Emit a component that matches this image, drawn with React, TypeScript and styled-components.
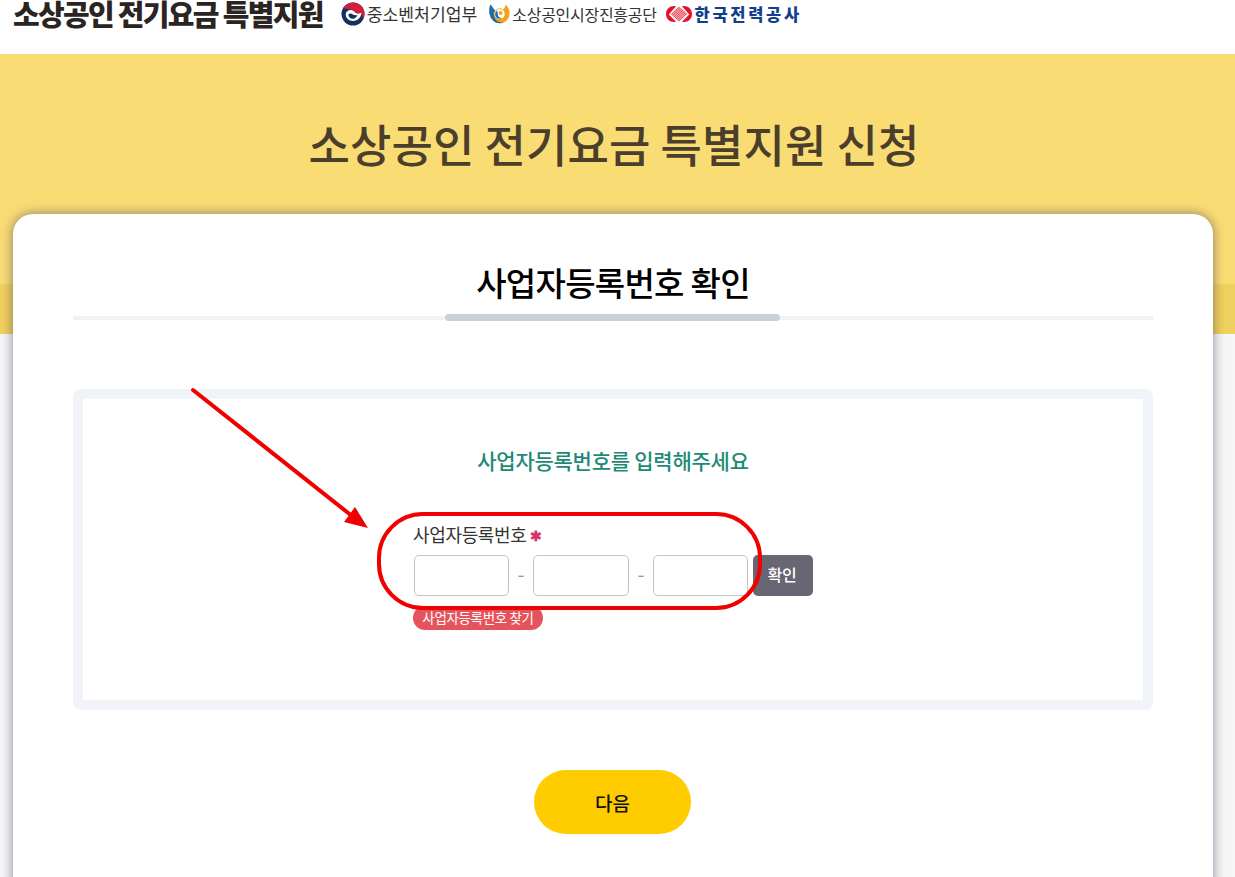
import React from 'react';
import styled, { createGlobalStyle } from 'styled-components';

const GlobalStyle = createGlobalStyle`
  html, body {
    margin: 0;
    padding: 0;
    height: 877px;
    overflow: hidden;
    background: #f6f6f6;
    font-family: "Noto Sans CJK KR", "Noto Sans", sans-serif;
  }
  * { box-sizing: border-box; }
`;

const Page = styled.div`
  position: relative;
  width: 1235px;
  height: 877px;
  overflow: hidden;
`;

const Header = styled.header`
  height: 54px;
  background: #fff;
  display: flex;
  align-items: flex-start;
  padding-left: 13px;
`;

const BrandTitle = styled.h1`
  margin: 0 18px 0 0;
  font-size: 29px;
  line-height: 27px;
  font-weight: 900;
  letter-spacing: -1.7px;
  color: #2a2522;
  white-space: nowrap;
`;

const Partner = styled.div<{ $gap: number; $size: number; $spacing: number }>`
  display: flex;
  align-items: center;
  height: 27px;
  margin-right: ${p => p.$gap}px;
  color: #333;
  font-size: ${p => p.$size}px;
  letter-spacing: ${p => p.$spacing}px;
  white-space: nowrap;
`;

const KepcoName = styled.span`
  color: #123f8c;
  font-weight: 900;
  font-size: 16.5px;
  letter-spacing: 2.7px;
`;

const Hero = styled.section`
  height: 280px;
  background: linear-gradient(#fadc75 0 230px, #f0d05e 230px);
  padding: 59px 7px 0 0;
  text-align: center;
`;

const HeroTitle = styled.h2`
  margin: 0;
  font-size: 45px;
  line-height: 62px;
  font-weight: 500;
  letter-spacing: 0.05px;
  color: #4b3f2c;
`;

const Card = styled.main`
  position: relative;
  width: 1200px;
  height: 700px;
  margin: -120px 0 0 13px;
  padding: 0 60px;
  background: #fff;
  border-radius: 20px;
  box-shadow: 0 0 12px rgba(50, 40, 80, 0.55);
`;

const SectionHead = styled.div`
  height: 106px;
  border-bottom: 4px solid #f0f2f6;
  display: flex;
  flex-direction: column;
  align-items: center;
  justify-content: flex-end;
  position: relative;
`;

const SectionTitle = styled.h3`
  margin: 0 0 10px;
  font-size: 33px;
  line-height: 48px;
  font-weight: 500;
  letter-spacing: -0.7px;
  color: #000;
`;

const TitleBar = styled.span`
  position: absolute;
  bottom: -5px;
  left: 372px;
  width: 335px;
  height: 7px;
  border-radius: 4px;
  background: #c8d0da;
`;

const FormBox = styled.div`
  margin-top: 69px;
  height: 321px;
  border: 10px solid #f0f3f8;
  border-radius: 8px;
  padding-top: 42px;
`;

const Prompt = styled.p`
  margin: 0 0 42px;
  text-align: center;
  font-size: 21px;
  line-height: 38px;
  font-weight: 500;
  letter-spacing: -0.25px;
  color: #1e8a76;
`;

const Field = styled.div`
  margin-left: 331px;
`;

const FieldLabel = styled.label`
  display: flex;
  align-items: flex-start;
  height: 34px;
  margin-left: -1px;
  font-size: 18px;
  line-height: 26px;
  letter-spacing: -0.35px;
  color: #333;
`;

const Required = styled.span`
  color: #d6336c;
  font-size: 14px;
  font-weight: 700;
  margin-left: 4px;
  padding-top: 1px;
`;

const InputRow = styled.div`
  display: flex;
  align-items: center;
  height: 41px;
`;

const NumberInput = styled.input<{ $w: number }>`
  width: ${p => p.$w}px;
  height: 41px;
  border: 1px solid #c4c4c4;
  border-radius: 5px;
  background: #fff;
  padding: 0 8px;
  outline: none;
`;

const Dash = styled.span`
  width: 24px;
  padding-bottom: 5px;
  text-align: center;
  color: #999;
  font-size: 20px;
`;

const CheckButton = styled.button`
  width: 60px;
  height: 41px;
  margin-left: 5px;
  padding: 0 2px 4px 0;
  border: none;
  border-radius: 5px;
  background: #686672;
  color: #fff;
  font: 500 16px "Noto Sans CJK KR", sans-serif;
  letter-spacing: -0.2px;
`;

const FindBadge = styled.a`
  display: block;
  margin: 10px 0 0 -1px;
  width: 130px;
  height: 24px;
  border-radius: 12px;
  background: #e5545c;
  color: #fff;
  font-size: 13.5px;
  line-height: 23px;
  text-align: center;
  letter-spacing: -0.35px;
  white-space: nowrap;
`;

const Actions = styled.div`
  margin-top: 60px;
  padding-right: 1px;
  display: flex;
  justify-content: center;
`;

const NextButton = styled.button`
  width: 157px;
  height: 64px;
  border: none;
  border-radius: 32px;
  background: #ffcc00;
  color: #111;
  font: 500 19px "Noto Sans CJK KR", sans-serif;
`;

const Markup = styled.svg`
  position: absolute;
  left: 0;
  top: 0;
  pointer-events: none;
`;

const LogoIcon = styled.svg<{ $gap: number }>`
  flex: none;
  margin-right: ${p => p.$gap}px;
`;

const GovLogo = () => (
  <LogoIcon $gap={2} width="24" height="24" viewBox="0 0 24 24">
    <circle cx="12" cy="12" r="11.5" fill="#14305f" />
    <path d="M2.2 6C4.4 2.6 8 .5 12 .5c6.4 0 11.5 5.1 11.5 11.5 0 2.2-.6 4.2-1.6 6 .6-4.400-2.400-7.800-5.400-6.600C14.500 12.200 13 8 9 7.200 6.400 6.700 4 7.400 2.200 6z" fill="#d21f3c" />
    <path d="M4.800 11.500C5.600 8.600 8.400 7.400 11 8.200c2.400.700 3 3.100 5.200 3.400 2 .3 3.200-.6 4-.8.200 4.600-3.300 8.200-8.200 8.200-4.400 0-7.800-3.400-7.200-7.500z" fill="#fff" />
    <path d="M7.300 12.700c1-1.400 3-1.500 4.200-.5 1.400 1.200 3.300 1.500 5 .6-.6 2.400-2.400 3.900-4.700 3.900-2.400 0-4.300-1.700-4.500-4z" fill="#14305f" />
  </LogoIcon>
);

const SemasLogo = () => (
  <LogoIcon $gap={2} width="21" height="22" viewBox="0 0 21 22">
    <path d="M1.500 1.500C-.5 6 -.3 13 3.500 17c3.500 3.800 9.500 4.300 13.500 1 3.800-3.200 4.500-9 2.500-12.500-.8-1.500-1.800-3-3-4-.2 2.500-1 4-2.500 5-2-2-6-1.800-8 1.500C5 6.500 3.500 4 1.500 1.500z" fill="#f2a21a" />
    <path d="M1.500 1.500C-.5 6 -.3 13 3.500 17c3 3.200 7.500 4 11 2.500-3.500.5-7-1-8.500-4C4 11.500 4.200 8 6.500 8 5 6.500 3.500 4 1.500 1.500z" fill="#1a6db5" />
    <circle cx="10.700" cy="11" r="5" fill="#fff" />
    <path d="M8 7.500c-2 1.500-2.500 4.500-1 6.500 1.500 1.800 4 2.300 6 1-2 .2-3.500-.8-4-2.500-.4-1.700-.2-3.500-1-5z" fill="#1a6db5" />
    <circle cx="11.500" cy="10" r="2" fill="#f2a21a" />
  </LogoIcon>
);

const KepcoLogo = () => (
  <LogoIcon $gap={3} width="26" height="18" viewBox="0 0 26 18">
    <defs>
      <pattern id="kepcoLines" width="1.600" height="1.600" patternUnits="userSpaceOnUse" patternTransform="rotate(45)">
        <rect width="1.600" height="1.600" fill="#e8404f" />
        <rect width="0.700" height="1.600" fill="#ffd0d5" />
      </pattern>
    </defs>
    <path d="M8 1C3.500 1 0 4.500 0 9s3.500 8 8 8c.8 0 1.300-.1 2-.3L2.800 9.500 10 1.300C9.300 1.100 8.700 1 8 1z" fill="#e3122b" />
    <path d="M18 1c4.500 0 8 3.500 8 8s-3.500 8-8 8c-.8 0-1.300-.1-2-.3l7.200-7.200L16 1.300C16.700 1.100 17.300 1 18 1z" fill="#e3122b" />
    <path d="M13 1.500 L21.500 9 L13 16.800 L4.500 9z" fill="url(#kepcoLines)" />
  </LogoIcon>
);

const App: React.FC = () => {
  return (
    <Page>
      <GlobalStyle />
      <Header>
        <BrandTitle>소상공인 전기요금 특별지원</BrandTitle>
        <Partner $gap={12} $size={17.200} $spacing={0}>
          <GovLogo />
          중소벤처기업부
        </Partner>
        <Partner $gap={9} $size={16} $spacing={-0.300}>
          <SemasLogo />
          소상공인시장진흥공단
        </Partner>
        <Partner $gap={0} $size={15} $spacing={0}>
          <KepcoLogo />
          <KepcoName>한국전력공사</KepcoName>
        </Partner>
      </Header>
      <Hero>
        <HeroTitle>소상공인 전기요금 특별지원 신청</HeroTitle>
      </Hero>
      <Card>
        <SectionHead>
          <SectionTitle>사업자등록번호 확인</SectionTitle>
          <TitleBar />
        </SectionHead>
        <FormBox>
          <Prompt>사업자등록번호를 입력해주세요</Prompt>
          <Field>
            <FieldLabel>
              사업자등록번호<Required>✱</Required>
            </FieldLabel>
            <InputRow>
              <NumberInput $w={95} />
              <Dash>-</Dash>
              <NumberInput $w={96} />
              <Dash>-</Dash>
              <NumberInput $w={95} />
              <CheckButton>확인</CheckButton>
            </InputRow>
            <FindBadge>사업자등록번호 찾기</FindBadge>
          </Field>
        </FormBox>
        <Actions>
          <NextButton>다음</NextButton>
        </Actions>
      </Card>
      <Markup width="1235" height="877" viewBox="0 0 1235 877">
        <rect x="379" y="514" width="381" height="94" rx="44" fill="none" stroke="#f00000" strokeWidth="4" />
        <line x1="193" y1="390" x2="352" y2="516" stroke="#f00000" strokeWidth="4" strokeLinecap="round" />
        <path d="M368 528 L344 522 L355 507z" fill="#f00000" />
      </Markup>
    </Page>
  );
};

export default App;
